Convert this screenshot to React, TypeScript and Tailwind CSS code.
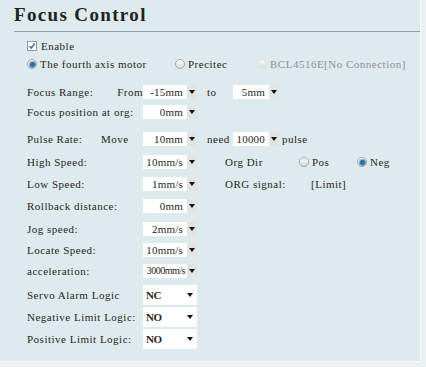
import React from 'react';

const serif = { fontFamily: '"Liberation Serif", "Times New Roman", serif' };

function Radio({ on = false, dim = false }: { on?: boolean; dim?: boolean }) {
  return (
    <span
      className={`relative inline-flex w-[10px] h-[10px] shrink-0 rounded-full border items-center justify-center bg-gradient-to-b from-white to-[#d5dbde] ${
        dim ? 'border-[#cfd8dc] opacity-60' : 'border-[#9aa6ab]'
      }`}
    >
      {on && <span className="w-[5px] h-[5px] rounded-full bg-[#2d6fa6] ring-1 ring-[#7fa9c9]" />}
    </span>
  );
}

function Check() {
  return (
    <span className="inline-flex w-[10px] h-[10px] shrink-0 border border-[#8c9ca6] bg-white items-center justify-center">
      <svg width="8" height="8" viewBox="0 0 8 8">
        <path d="M1.5 4.2 L3.2 6 L6.8 1.5" stroke="#3a6fb0" strokeWidth="1.5" fill="none" />
      </svg>
    </span>
  );
}

function Arrow() {
  return (
    <svg width="6" height="4" viewBox="0 0 6 4">
      <path d="M0 0 H6 L3 4 Z" fill="#111" />
    </svg>
  );
}

function Drop({ value, wide = true, tight = false }: { value: string; wide?: boolean; tight?: boolean }) {
  return (
    <div className={`flex h-[14px] bg-white ${wide ? 'w-[54px]' : 'w-[46px]'}`}>
      <span
        className={`flex-1 text-right leading-[14px] whitespace-nowrap ${
          tight ? 'text-[10px] tracking-[-0.5px] pr-[1px]' : 'tracking-[0.2px] pr-[3px]'
        }`}
      >
        {value}
      </span>
      <span className="w-[11px] bg-[#e3e3e3] border-l border-white flex items-center justify-center">
        <Arrow />
      </span>
    </div>
  );
}

function Logic({ value }: { value: string }) {
  return (
    <div className="flex items-center w-[54px] h-[20px] bg-white pl-[3px] pr-[4px] justify-between">
      <span className="font-bold tracking-[-0.5px]">{value}</span>
      <Arrow />
    </div>
  );
}

function Label({ children }: { children: React.ReactNode }) {
  return <div className="w-[116px] shrink-0 flex whitespace-pre">{children}</div>;
}

export default function App() {
  return (
    <div className="w-[426px] h-[367px] bg-[#ecf2f3] text-[#262626] overflow-hidden" style={serif}>
      <div className="w-[421px] h-[362px] bg-[#dfeaee] border-r border-b border-[#f6f9f9] text-[11px] tracking-[0.5px]">
        <div className="h-[33px] pl-[14px]">
          <div className="h-[32px] border-b border-[#8f9ea3] pt-[5px] text-[19px] leading-[20px] font-bold tracking-[1.35px] text-[#222]">
            Focus Control
          </div>
        </div>

        <div className="pl-[27px]">
          <div className="mt-[5px] h-[16px] flex items-center gap-[4px]">
            <Check />
            <span>Enable</span>
          </div>

          <div className="mt-[2px] h-[16px] flex items-center">
            <Radio on />
            <span className="ml-[3px] w-[135px]">The fourth axis motor</span>
            <Radio />
            <span className="ml-[3px] w-[69px]">Precitec</span>
            <Radio dim />
            <span className="ml-[3px] text-[#8a8f92]">BCL4516E[No Connection]</span>
          </div>

          <div className="mt-[12px] h-[16px] flex items-center">
            <Label>
              <span className="w-[95px]">Focus Range:</span>
              <span>From</span>
            </Label>
            <Drop value="-15mm" />
            <span className="ml-[10px] w-[26px]">to</span>
            <Drop value="5mm" wide={false} />
          </div>

          <div className="mt-[4px] h-[16px] flex items-center">
            <Label>Focus position at org:</Label>
            <Drop value="0mm" />
          </div>

          <div className="mt-[11px] h-[16px] flex items-center">
            <Label>
              <span className="w-[74px]">Pulse Rate:</span>
              <span>Move</span>
            </Label>
            <Drop value="10mm" />
            <span className="ml-[10px] w-[26px]">need</span>
            <Drop value="10000" wide={false} />
            <span className="ml-[3px]">pulse</span>
          </div>

          <div className="mt-[7px] h-[16px] flex items-center">
            <Label>High Speed:</Label>
            <Drop value="10mm/s" />
            <span className="ml-[28px] w-[74px]">Org Dir</span>
            <Radio />
            <span className="ml-[3px] w-[45px]">Pos</span>
            <Radio on />
            <span className="ml-[3px]">Neg</span>
          </div>

          <div className="mt-[6px] h-[16px] flex items-center">
            <Label>Low Speed:</Label>
            <Drop value="1mm/s" />
            <span className="ml-[28px] w-[86px]">ORG signal:</span>
            <span>[Limit]</span>
          </div>

          <div className="mt-[6px] h-[16px] flex items-center">
            <Label>Rollback distance:</Label>
            <Drop value="0mm" />
          </div>

          <div className="mt-[7px] h-[16px] flex items-center">
            <Label>Jog speed:</Label>
            <Drop value="2mm/s" />
          </div>

          <div className="mt-[5px] h-[16px] flex items-center">
            <Label>Locate Speed:</Label>
            <Drop value="10mm/s" />
          </div>

          <div className="mt-[5px] h-[16px] flex items-center">
            <Label>acceleration:</Label>
            <Drop value="3000mm/s" tight />
          </div>

          <div className="mt-[8px] h-[16px] flex items-center">
            <Label>Servo Alarm Logic</Label>
            <Logic value="NC" />
          </div>

          <div className="mt-[6px] h-[16px] flex items-center">
            <Label>Negative Limit Logic:</Label>
            <Logic value="NO" />
          </div>

          <div className="mt-[6px] h-[16px] flex items-center">
            <Label>Positive Limit Logic:</Label>
            <Logic value="NO" />
          </div>
        </div>
      </div>
    </div>
  );
}
